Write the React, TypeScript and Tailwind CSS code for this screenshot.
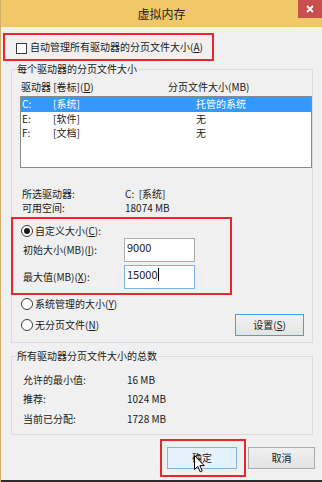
/**
 * VirtualMemoryDialog
 *
 * Windows 8 style "虚拟内存" dialog with highlighted (annotated) areas.
 */

import type { ReactNode } from 'react';

interface DriveRow {
  drive: string;
  label: string;
  size: string;
  selected?: boolean;
}

const DRIVES: DriveRow[] = [
  { drive: 'C:', label: '[系统]', size: '托管的系统', selected: true },
  { drive: 'E:', label: '[软件]', size: '无' },
  { drive: 'F:', label: '[文档]', size: '无' },
];

const TOTALS = [
  { label: '允许的最小值:', value: '16 MB' },
  { label: '推荐:', value: '1024 MB' },
  { label: '当前已分配:', value: '1728 MB' },
];

function Key({ k }: { k: string }) {
  return (
    <>
      (<span className="underline underline-offset-1">{k}</span>)
    </>
  );
}

function Radio({ checked = false }: { checked?: boolean }) {
  return (
    <span className="flex h-[12px] w-[12px] shrink-0 items-center justify-center rounded-full border border-[#3a3a3a] bg-white">
      {checked && <span className="h-[6px] w-[6px] rounded-full bg-[#1a1a1a]" />}
    </span>
  );
}

function GroupBox({ title, className, children }: { title: string; className: string; children: ReactNode }) {
  return (
    <fieldset className={className}>
      <legend className="ml-[-6px] px-[1px] leading-[14px]">{title}</legend>
      {children}
    </fieldset>
  );
}

export default function App() {
  return (
    <div className="relative flex h-[482px] w-[322px] flex-col overflow-hidden border-l border-[#d2b06a] bg-[#f0f0f0] font-['Noto_Sans_CJK_SC',sans-serif] text-[10px] leading-[14px] text-[#1a1a1a]">
      {/* Title bar */}
      <div className="grid h-[27px] shrink-0 grid-cols-[24px_1fr_24px] bg-[#f0c966]">
        <span />
        <div className="flex items-center justify-center text-[12px] text-[#222]">虚拟内存</div>
        <div className="flex h-[18px] items-center justify-center bg-[#c7504f]">
          <svg width="8" height="8" viewBox="0 0 8 8">
            <path d="M1 1 L7 7 M7 1 L1 7" stroke="white" strokeWidth="1.8" />
          </svg>
        </div>
      </div>

      {/* Auto manage */}
      <div className="ml-[2px] mt-[6px] flex h-[28px] w-[211px] shrink-0 items-center border-2 border-[#e8262b] pl-[11px]">
        <span className="mr-[3px] mt-[2px] h-[11px] w-[11px] border border-[#3a3a3a] bg-white" />
        <span>
          自动管理所有驱动器的分页文件大小<Key k="A" />
        </span>
      </div>

      {/* Per drive */}
      <GroupBox
        title="每个驱动器的分页文件大小"
        className="ml-[10px] mt-[1px] w-[302px] min-w-0 shrink-0 border border-[#dcdcdc] pb-[6px] pl-[10px] pr-[1px]"
      >
        <div className="ml-[-1px] mt-[4px] flex">
          <span className="w-[147px]">
            驱动器 [卷标]<Key k="D" />
          </span>
          <span>分页文件大小(MB)</span>
        </div>

        <div className="ml-[-2px] mt-[2px] h-[72px] w-[292px] border border-[#8a8a8a] bg-white">
          {DRIVES.map((row) => (
            <div
              key={row.drive}
              className={`flex h-[14.5px] items-center pl-[1px] ${row.selected ? 'bg-[#3399ff] text-white' : ''}`}
            >
              <span className="w-[31px]">{row.drive}</span>
              <span className="w-[143px]">{row.label}</span>
              <span>{row.size}</span>
            </div>
          ))}
        </div>

        <div className="mt-[19px] flex">
          <span className="w-[103px]">所选驱动器:</span>
          <span>C:&nbsp;&nbsp;[系统]</span>
        </div>
        <div className="flex">
          <span className="w-[103px]">可用空间:</span>
          <span>18074 MB</span>
        </div>

        {/* Custom size */}
        <div className="ml-[-11px] mt-[2px] flex h-[78px] w-[221px] flex-col border-2 border-[#e8262b] pb-[4px] pl-[8px]">
          <div className="mt-[5px] flex h-[14px] items-center gap-[2px]">
            <Radio checked />
            <span>
              自定义大小<Key k="C" />:
            </span>
          </div>
          <div className="flex h-[24px] items-center">
            <span className="w-[103px] pl-[2px]">
              初始大小(MB)<Key k="I" />:
            </span>
            <div className="h-[24px] w-[71px] border border-[#abadb3] bg-white pl-[2px] pt-[1px] text-[11px]">9000</div>
          </div>
          <div className="mt-[3px] flex h-[24px] items-center">
            <span className="w-[103px] pl-[2px]">
              最大值(MB)<Key k="X" />:
            </span>
            <div className="flex h-[24px] w-[71px] items-start border border-[#7eb4ea] bg-white pl-[2px] pt-[1px] text-[11px]">
              15000
              <span className="mt-[1px] h-[13px] w-px bg-black" />
            </div>
          </div>
        </div>

        <div className="ml-[-1px] mt-[2px] flex h-[14px] items-center gap-[2px]">
          <Radio />
          <span>
            系统管理的大小<Key k="Y" />
          </span>
        </div>
        <div className="ml-[-1px] mt-[3px] flex h-[22px] items-center">
          <div className="flex w-[214px] items-center gap-[2px]">
            <Radio />
            <span>
              无分页文件<Key k="N" />
            </span>
          </div>
          <button className="flex h-[22px] w-[69px] items-center justify-center border border-[#4a9be8] bg-linear-to-b from-[#f2f2f2] to-[#e4e4e4]">
            设置<Key k="S" />
          </button>
        </div>
      </GroupBox>

      {/* Totals */}
      <GroupBox
        title="所有驱动器分页文件大小的总数"
        className="ml-[10px] mt-[6px] w-[302px] min-w-0 shrink-0 border border-[#dcdcdc] pb-[5px] pl-[10px] pr-[1px]"
      >
        <div className="mt-[7px]">
          {TOTALS.map((t) => (
            <div key={t.label} className="flex h-[19.5px] items-center pl-[1px]">
              <span className="w-[104px]">{t.label}</span>
              <span>{t.value}</span>
            </div>
          ))}
        </div>
      </GroupBox>

      {/* Actions */}
      <div className="ml-[159px] mt-[4px] flex items-start">
        <div className="border-2 border-[#e8262b] pb-[6px] pl-[5px] pr-[7px] pt-[6px]">
          <button className="flex h-[22px] w-[70px] items-center justify-center border border-[#7eb4ea] bg-[#e5f1fb]">
            确定
          </button>
        </div>
        <button className="ml-[2px] mt-[8px] flex h-[22px] w-[67px] items-center justify-center border border-[#acacac] bg-linear-to-b from-[#f0f0f0] to-[#e3e3e3]">
          取消
        </button>
      </div>

      <div className="mt-auto h-[2px] shrink-0 bg-[#2b2b2b]" />

      {/* Mouse pointer over the OK button */}
      <svg className="absolute left-[193px] top-[455px]" width="11" height="18" viewBox="0 0 11 18">
        <path
          d="M0.5 0.5 L0.5 14.5 L3.8 11.4 L6.2 16.8 L8.2 15.9 L5.9 10.6 L10.2 10.6 Z"
          fill="white"
          stroke="black"
          strokeWidth="1"
          strokeLinejoin="round"
        />
      </svg>
    </div>
  );
}
